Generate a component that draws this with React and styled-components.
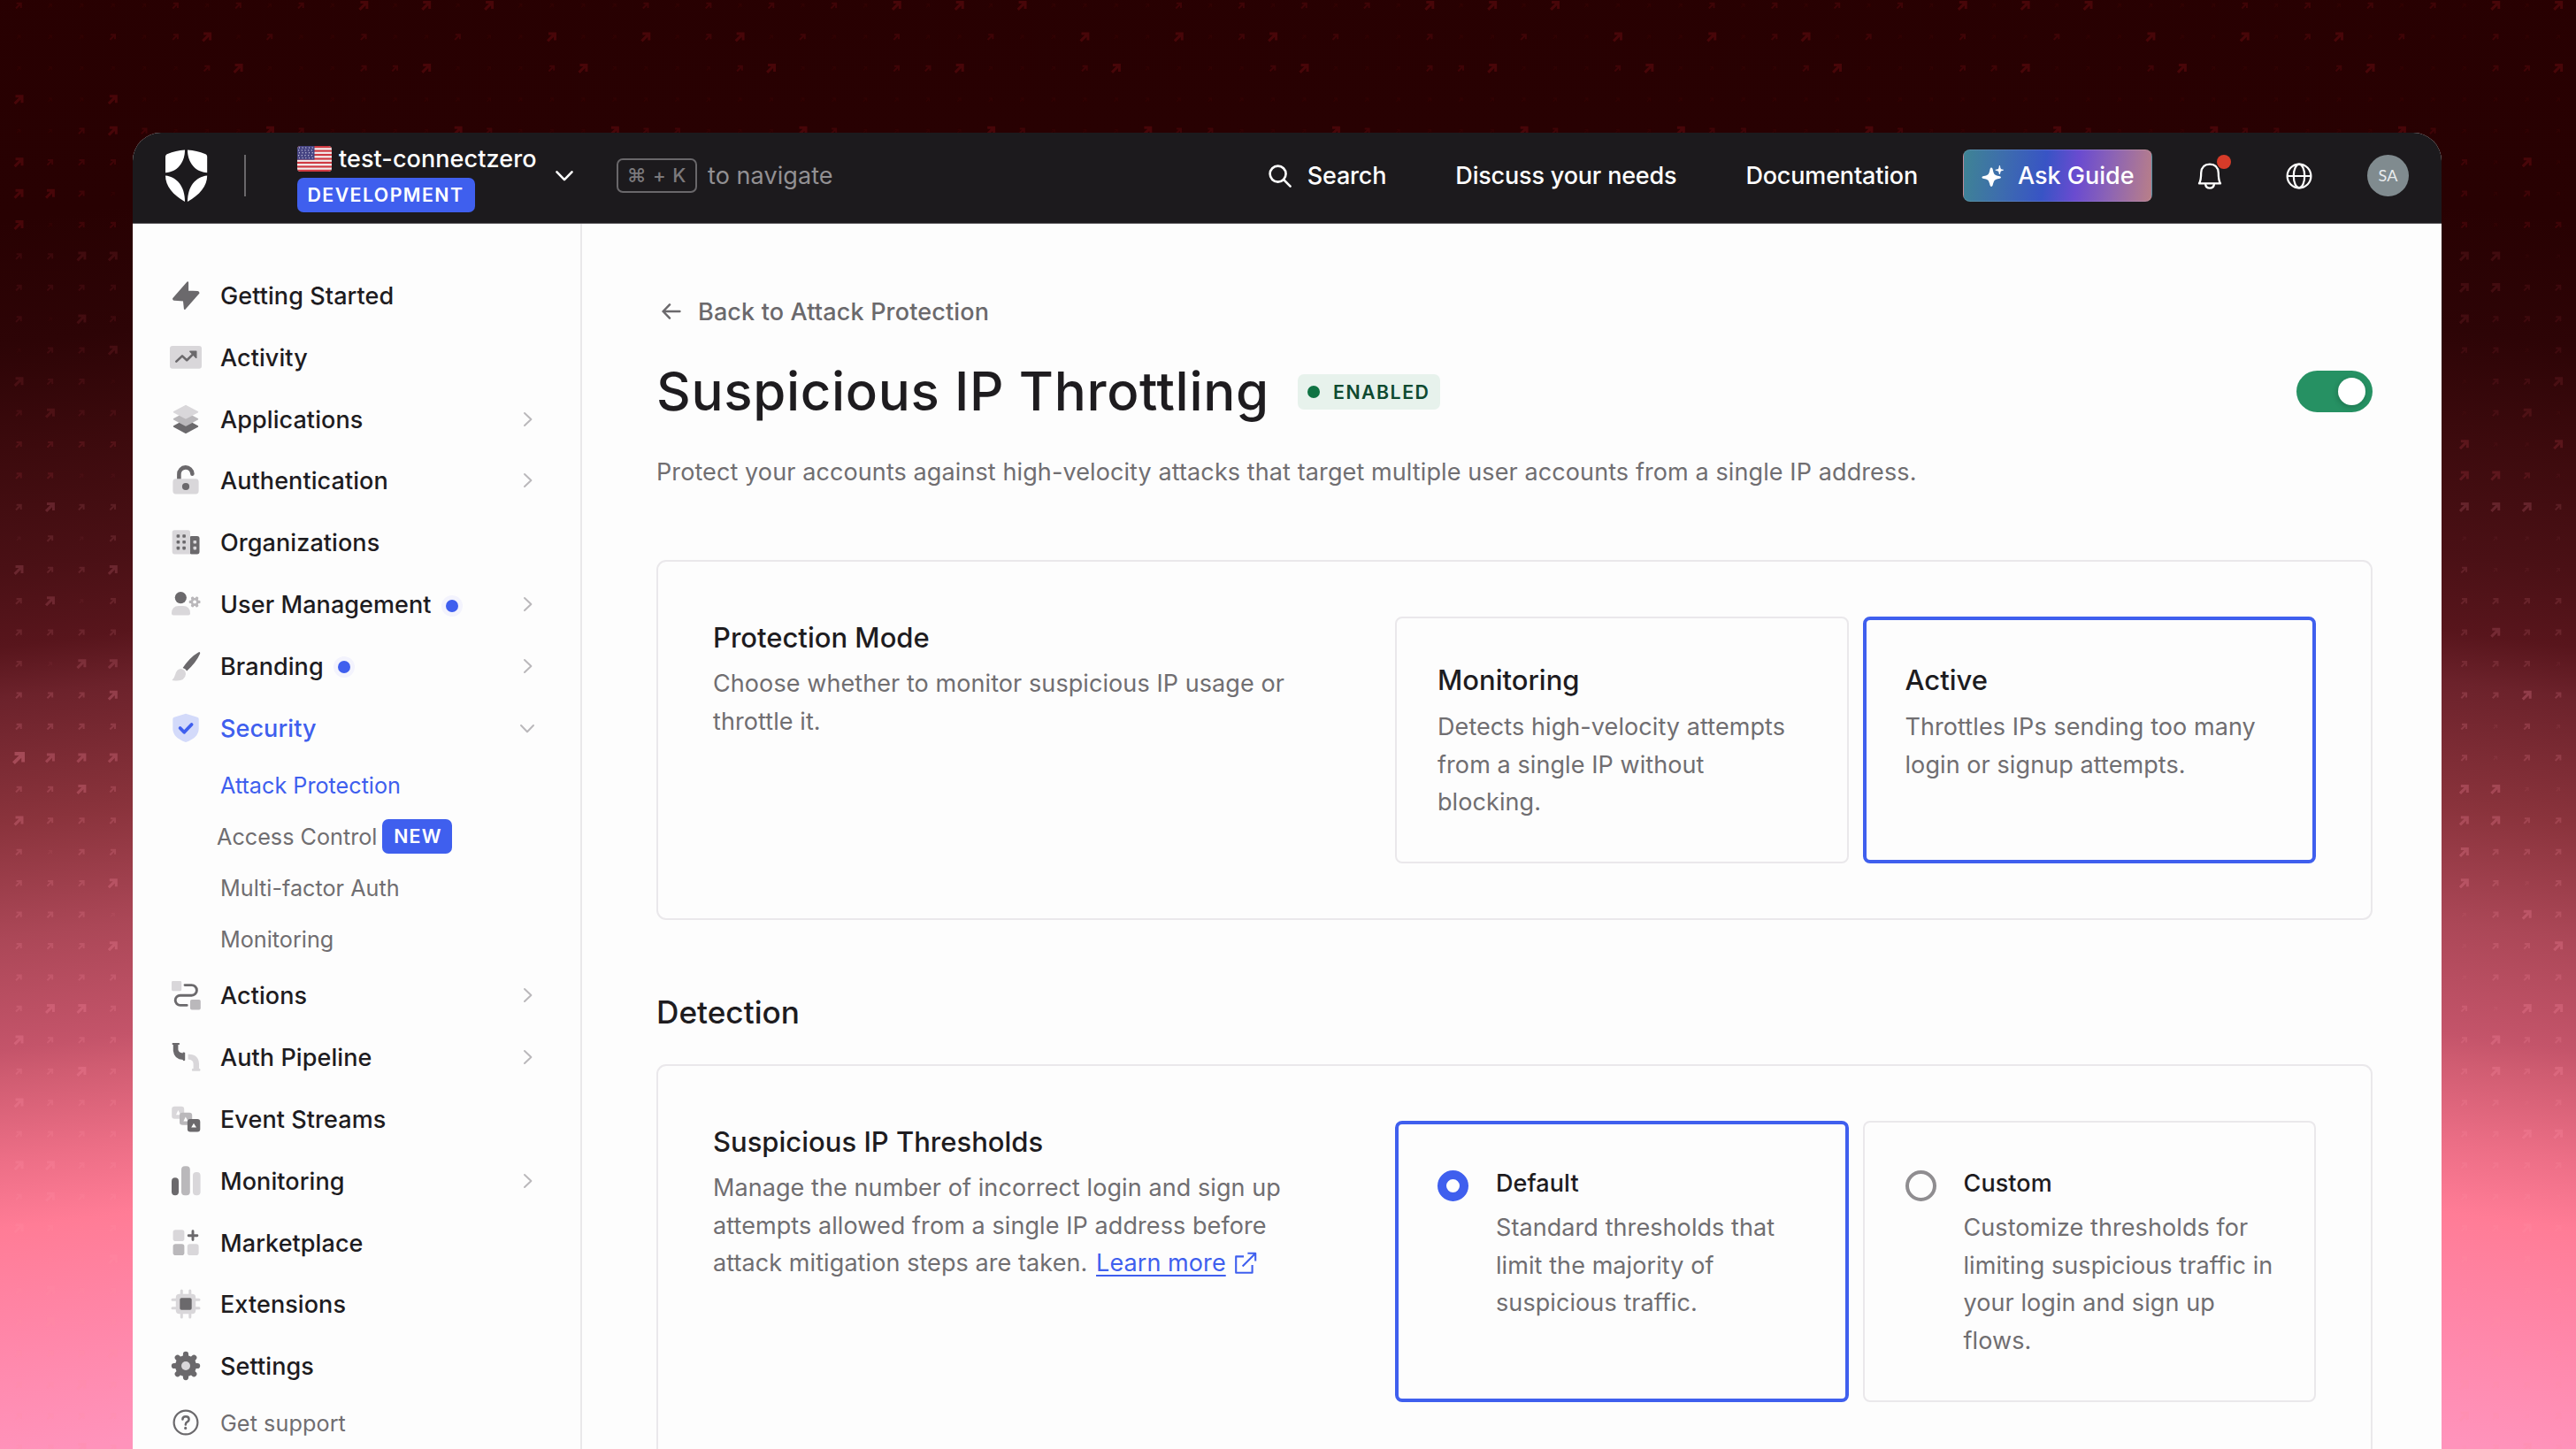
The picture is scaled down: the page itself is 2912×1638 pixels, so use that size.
import React, { useState } from 'react'
import styled, { createGlobalStyle } from 'styled-components';

const DARK = '#6b696c';
const MID = '#bab8bb';
const LIGHT = '#d9d7da';
const BLUE = '#3f5fee';

// arrow sizes of the backdrop, one string per row, one digit per column
const leftArrows = {
  0: '1000', 1: '0001', 2: '0000', 3: '3003', 4: '0013', 5: '3111', 6: '3310',
  22: '1113', 23: '1111', 24: '4333', 25: '1131', 26: '3111', 27: '1011',
  28: '1113', 29: '1110', 30: '1113', 31: '1111', 32: '1331', 33: '3111',
  34: '1131', 35: '3111', 36: '1111', 37: '3311', 38: '1311', 39: '3101',
  40: '0003', 41: '1311', 42: '1311', 43: '1113', 44: '1131', 45: '1111', 46: '1131',
};
const rightArrows = {
  11: '1101', 12: '0113', 13: '0130', 14: '3003', 15: '3310', 16: '3331',
  17: '0000', 18: '1000', 19: '1111', 20: '1311',
};
const ARROW_STEP = 35.44;
const ARROW_WIDTH = [5, 7.5, 7.5, 11, 14];

const arrowLevel = (row, col) => {
  if (col < 4 && leftArrows[row]) return Number(leftArrows[row][col]);
  if (col > 77 && rightArrows[row]) return Number(rightArrows[row][col - 78]);
  const hash = (row * 7919 + col * 104729 + row * col * 31) % 17;
  if (row < 6) return hash > 13 ? 3 : hash > 9 ? 1 : 0;
  return hash > 12 ? 3 : hash > 2 ? 1 : 0;
};

const Backdrop = () => {
  const arrows = [];
  for (let row = 0; row < 47; row++) {
    for (let col = 0; col < 82; col++) {
      // everything behind the window stays empty
      if (row > 4 && col > 3 && col < 78) continue;
      const level = arrowLevel(row, col);
      const size = ARROW_WIDTH[level];
      const x = 21 + col * ARROW_STEP - size / 2;
      const y = 6.5 + row * ARROW_STEP - size / 2;
      const base = row < 8 ? 0.65 : row < 14 ? 0.45 : row < 22 ? 0.65 : 0.95;
      arrows.push(
        <path
          key={`${row}-${col}`}
          d="M2 0H11V9H8V5.2L2.2 11L0 8.8L5.8 3H2Z"
          transform={`translate(${x} ${y}) scale(${size / 11})`}
          fill={row < 8 ? '#e0202c' : row < 16 ? '#f0505f' : '#ff8fa6'}
          opacity={base * [0.08, 0.2, 0.2, 0.27, 0.34][level]}
        />
      );
    }
  }
  return <BackdropSvg width="2912" height="1638">{arrows}</BackdropSvg>;
};

const Gear = ({ cx, cy, r, tooth, fill, hole, holeFill }) => (
  <g fill={fill}>
    <circle cx={cx} cy={cy} r={r * 0.74} />
    {[0, 45, 90, 135].map((deg) => (
      <rect
        key={deg}
        x={cx - tooth / 2}
        y={cy - r}
        width={tooth}
        height={r * 2}
        rx={tooth / 2}
        transform={`rotate(${deg} ${cx} ${cy})`}
      />
    ))}
    <circle cx={cx} cy={cy} r={hole} fill={holeFill} />
  </g>
);

const navIcons = {
  bolt: (
    <path d="M20.2 3.2L4 21.5Q3.8 22.6 5 22.8L15.8 23.6L16.8 33.2L32.6 15.2Q32.6 14 31.4 13.9L20.2 13.4Z" fill={DARK} stroke={DARK} strokeWidth="1.8" strokeLinejoin="round" />
  ),
  activity: (
    <>
      <rect x="0" y="5" width="36" height="25.8" rx="3" fill={LIGHT} />
      <path d="M7.3 22.6L14 16.4L19.2 21.2L27 13.6" fill="none" stroke={DARK} strokeWidth="2.6" strokeLinecap="round" strokeLinejoin="round" />
      <path d="M22.8 11.2H29.8V18.4Z" fill={DARK} stroke={DARK} strokeWidth="1.4" strokeLinejoin="round" />
    </>
  ),
  layers: (
    <g strokeWidth="1.6" strokeLinejoin="round">
      <path d="M18 18.8L31.4 26L18 33.2L4.6 26Z" fill={DARK} stroke={DARK} />
      <path d="M18 10.6L31.4 17.8L18 25L4.6 17.8Z" fill={MID} stroke={MID} />
      <path d="M18 2.6L31.4 9.7L18 16.8L4.6 9.7Z" fill={LIGHT} stroke={LIGHT} />
    </g>
  ),
  lock: (
    <>
      <path d="M10.4 16.5V11.2A7.5 7.5 0 0 1 25.4 10.6" fill="none" stroke={DARK} strokeWidth="4.6" strokeLinecap="round" />
      <rect x="3.4" y="16.3" width="29.2" height="17.2" rx="3.4" fill={LIGHT} />
      <circle cx="18" cy="25" r="4.1" fill={DARK} />
    </>
  ),
  building: (
    <>
      <rect x="22" y="11" width="11.5" height="20.4" rx="2.6" fill={DARK} />
      <path d="M5.4 4.2H20.4Q23 4.2 23 6.8V31.4H5.4Q2.7 31.4 2.7 28.8V6.8Q2.7 4.2 5.4 4.2Z" fill={LIGHT} />
      {[11, 17.8, 24.6].map((y) => (
        <g key={y} fill={DARK}>
          <rect x="7.6" y={y - 1.8} width="3.6" height="3.6" rx="0.8" />
          <rect x="14.3" y={y - 1.8} width="3.6" height="3.6" rx="0.8" />
        </g>
      ))}
      <rect x="26.5" y="16" width="3.6" height="3.6" rx="0.8" fill={LIGHT} />
      <rect x="26.5" y="22.8" width="3.6" height="3.6" rx="0.8" fill={LIGHT} />
    </>
  ),
  users: (
    <>
      <circle cx="12.3" cy="10.6" r="6.6" fill={DARK} />
      <path d="M2 28.5Q2 20 10 20H15Q23 20 23 28.5Q23 30.6 21 30.6H4Q2 30.6 2 28.5Z" fill={LIGHT} />
      <g fill={MID}>
        {[30, 90, 150].map((deg) => (
          <rect key={deg} x="26.4" y="9" width="3.4" height="12.8" rx="1.2" transform={`rotate(${deg} 28.1 15.4)`} />
        ))}
        <circle cx="28.1" cy="15.4" r="4.5" />
        <circle cx="28.1" cy="15.4" r="1.9" fill="#fff" />
      </g>
    </>
  ),
  brush: (
    <>
      <path d="M14.6 20Q22.5 8 32.2 2.4Q34.4 1.4 34.2 3.8Q29.5 14.5 19.2 23.4Q17.6 21 14.6 20Z" fill={DARK} />
      <path d="M2.4 34Q5.2 31.4 6.2 27.2Q7.6 21.6 12.6 21Q17.6 21.8 18 26.6Q17.6 34.4 8 34.4Q3.6 34.6 2.4 34Z" fill={LIGHT} />
    </>
  ),
  shield: (
    <>
      <path d="M18 1.8L31 5.8Q32.7 6.4 32.7 8V18.4Q32.7 28.8 18 33.9Q3.3 28.8 3.3 18.4V8Q3.3 6.4 5 5.8Z" fill="#d3dafa" />
      <path d="M11.6 18L16.2 22.8L24.6 14" fill="none" stroke={BLUE} strokeWidth="3.8" strokeLinecap="round" strokeLinejoin="round" />
    </>
  ),
  actions: (
    <>
      <rect x="2" y="2" width="11.2" height="11.2" rx="1.4" fill={LIGHT} />
      <rect x="23" y="23" width="11.8" height="11.5" rx="1.8" fill={MID} />
      <path d="M17 6.6H24.6A5.8 5.8 0 0 1 24.6 18.2H11.8A5.5 5.5 0 0 0 11.8 29.4H19.2" fill="none" stroke={DARK} strokeWidth="2.9" strokeLinecap="round" />
    </>
  ),
  pipeline: (
    <>
      <path d="M3 2H10.6Q11.6 3 10.6 4H9.4V9.6Q9.8 13.2 14.6 13.4V12.8Q16 12 17.2 13V21.6Q16 22.8 14.8 21.8V21Q5 20.6 3.8 11V4H3Q2 3 3 2Z" fill={DARK} />
      <path d="M20.6 14.8Q32.4 14.4 33 25.6V31H34Q35.2 32.4 34 33.8H25.4Q24.2 32.4 25.4 31H26.6V25.6Q26.6 21 20.6 20.6Z" fill={LIGHT} />
    </>
  ),
  streams: (
    <>
      <rect x="2.2" y="3.8" width="14" height="14" rx="3.2" fill={LIGHT} />
      <path d="M9.4 8L12 13.2H7Z" fill="#fff" />
      <rect x="11" y="10.8" width="14.2" height="14" rx="3.2" fill={MID} />
      <path d="M17.8 15.4L20.6 20.4H15.4Z" fill="#fff" />
      <rect x="19.9" y="18" width="14.4" height="14.4" rx="3.2" fill={DARK} />
      <path d="M27 22.8L30 27.6H24.2Z" fill="#fff" />
    </>
  ),
  bars: (
    <>
      <rect x="2" y="14.2" width="8" height="20" rx="4" fill={DARK} />
      <rect x="13" y="1.2" width="9.8" height="33" rx="4" fill={MID} />
      <rect x="26" y="8" width="8.6" height="26.2" rx="4" fill={LIGHT} />
    </>
  ),
  market: (
    <>
      <rect x="3.6" y="3.3" width="12.8" height="12.8" rx="2.8" fill={LIGHT} />
      <rect x="3.6" y="19.3" width="12.8" height="12.8" rx="2.8" fill={MID} />
      <rect x="19.8" y="19.3" width="12.8" height="12.8" rx="2.8" fill={LIGHT} />
      <path d="M26 4.8V14.6M21.2 9.7H30.9" stroke={DARK} strokeWidth="2.9" strokeLinecap="round" />
    </>
  ),
  chip: (
    <>
      <path d="M13.3 3V33M22.8 3V33M3 13.3H33M3 22.8H33" stroke={LIGHT} strokeWidth="3" strokeLinecap="round" />
      <rect x="6.8" y="6.8" width="22.4" height="22.4" rx="4" fill={LIGHT} />
      <rect x="11.3" y="11.3" width="13.4" height="13.4" rx="1.8" fill={DARK} />
    </>
  ),
  gear: <Gear cx={18} cy={18} r={16.2} tooth={6.2} fill={DARK} hole={5} holeFill={LIGHT} />,
  help: (
    <g fill="none" stroke={DARK} strokeLinecap="round">
      <circle cx="18" cy="18" r="13.4" strokeWidth="2.2" />
      <path d="M14.4 14.6Q14.4 11.2 18 11.2Q21.6 11.2 21.6 14.4Q21.6 16.4 19.6 17.4Q17.8 18.4 17.8 20.4" strokeWidth="2.5" />
      <circle cx="17.7" cy="24.4" r="0.7" strokeWidth="1.8" />
    </g>
  ),
};

const Chevron = ({ down, size = 18, color = MID, stroke = 2 }) => (
  <svg width={size} height={size} viewBox="0 0 18 18" fill="none" stroke={color} strokeWidth={stroke} strokeLinecap="round" strokeLinejoin="round">
    <path d={down ? 'M2 6L9 13.2L16 6' : 'M6 2L13.4 9L6 16'} />
  </svg>
);

const Logo = () => (
  <svg width="49" height="59" viewBox="0 0 49 59" fill="#fff">
    <path d="M23 0.4C23 15 14 25.4 1 26.2V8.4C1 6.6 1.8 5.6 3.4 4.9C9.5 2.3 16 0.8 23 0.4Z" />
    <path d="M26 0.4C26 15 35 25.4 48.2 26.2V8.4C48.2 6.6 47.4 5.6 45.8 4.9C39.5 2.3 33 0.8 26 0.4Z" />
    <path d="M1 29.6C14 31 23 42 23 59C9.5 51.5 1 41.5 1 29.6Z" />
    <path d="M48.2 29.6C35 31 26 42 26 59C39.6 51.5 48.2 41.5 48.2 29.6Z" />
  </svg>
);

const Flag = () => (
  <FlagSvg width="39" height="29" viewBox="0 0 39 29">
    <rect width="39" height="29" fill="#f3eeee" />
    {[0, 1, 2, 3, 4, 5, 6].map((n) => (
      <rect key={n} y={n * 4.46} width="39" height="2.23" fill="#cf3a42" />
    ))}
    <rect width="19.5" height="15.6" fill="#454382" />
    {[0, 1, 2, 3, 4].map((r) =>
      [0, 1, 2, 3, 4].map((c) => (
        <circle key={`${r}${c}`} cx={2.4 + c * 3.7 - (r % 2) * 0.8} cy={2 + r * 2.9} r="0.7" fill="#c9c8de" />
      ))
    )}
  </FlagSvg>
);

const navItems = [
  { label: 'Getting Started', icon: 'bolt' },
  { label: 'Activity', icon: 'activity' },
  { label: 'Applications', icon: 'layers', more: true },
  { label: 'Authentication', icon: 'lock', more: true },
  { label: 'Organizations', icon: 'building' },
  { label: 'User Management', icon: 'users', more: true, dot: true },
  { label: 'Branding', icon: 'brush', more: true, dot: true },
  {
    label: 'Security',
    icon: 'shield',
    more: true,
    open: true,
    children: [
      { label: 'Attack Protection', active: true },
      { label: 'Access Control', isNew: true },
      { label: 'Multi-factor Auth' },
      { label: 'Monitoring' },
    ],
  },
  { label: 'Actions', icon: 'actions', more: true },
  { label: 'Auth Pipeline', icon: 'pipeline', more: true },
  { label: 'Event Streams', icon: 'streams' },
  { label: 'Monitoring', icon: 'bars', more: true },
  { label: 'Marketplace', icon: 'market' },
  { label: 'Extensions', icon: 'chip' },
  { label: 'Settings', icon: 'gear' },
];

const Header = () => (
  <TopBar>
    <Logo />
    <Divider />
    <Tenant>
      <TenantName><Flag /><span>test-connectzero</span></TenantName>
      <EnvBadge>DEVELOPMENT</EnvBadge>
    </Tenant>
    <TenantChevron><Chevron down size={22} color="#fff" stroke={2.1} /></TenantChevron>
    <Keys>⌘ + K</Keys>
    <KeysHint>to navigate</KeysHint>
    <TopLinks>
      <TopLink>
        <svg width="28" height="28" viewBox="0 0 28 28" fill="none" stroke="#fff" strokeWidth="2.6" strokeLinecap="round">
          <circle cx="11.6" cy="11.6" r="9" />
          <path d="M18.4 18.4L25.6 25.6" />
        </svg>
        Search
      </TopLink>
      <TopLink>Discuss your needs</TopLink>
      <TopLink>Documentation</TopLink>
    </TopLinks>
    <AskGuide>
      <svg width="26" height="26" viewBox="0 0 26 26" fill="#fff">
        <path d="M11 3.6Q12.2 3.6 12.6 5Q13.6 10.6 15.2 11.6Q16.4 12.6 20.6 13.2Q22 13.6 22 14.4Q22 15.4 20.6 15.8Q16.4 16.4 15.2 17.4Q13.6 18.6 12.6 23.6Q12.2 25 11 25Q10 25 9.6 23.6Q8.6 18.6 7 17.4Q5.8 16.4 1.6 15.8Q0.4 15.4 0.4 14.4Q0.4 13.6 1.6 13.2Q5.8 12.6 7 11.6Q8.6 10.6 9.6 5Q10 3.6 11 3.6Z" />
        <path d="M20.4 1.2Q21 4.8 21.6 5.2Q22.2 5.8 24.6 6.2Q22.2 6.8 21.6 7.4Q21 8 20.4 11Q19.8 8 19.2 7.4Q18.4 6.8 15.8 6.2Q18.4 5.8 19.2 5.2Q19.8 4.8 20.4 1.2Z" stroke="#fff" strokeWidth="0.8" />
      </svg>
      Ask Guide
    </AskGuide>
    <BellBox>
      <svg width="28" height="30" viewBox="0 0 28 30" fill="none" stroke="#fff" strokeWidth="2.3" strokeLinejoin="round">
        <path d="M2 23.4Q4.2 19.6 4.2 11.4Q4.8 1.6 14 1.6Q23.2 1.6 23.8 11.4Q23.8 19.6 26 23.4Z" />
        <path d="M9 24Q9.6 28.6 14 28.6Q18.4 28.6 19 24" />
      </svg>
      <RedDot />
    </BellBox>
    <svg width="30" height="30" viewBox="0 0 30 30" fill="none" stroke="#fff" strokeWidth="2.2">
      <circle cx="15" cy="15" r="13.4" />
      <ellipse cx="15" cy="15" rx="6.2" ry="13.4" />
      <path d="M1.6 15H28.4" />
    </svg>
    <Avatar>SA</Avatar>
  </TopBar>
);

const Sidebar = () => (
  <Side>
    {navItems.map((item) => (
      <React.Fragment key={item.label + item.icon}>
        <NavItem $active={item.open}>
          <svg width="36" height="36" viewBox="0 0 36 36">{navIcons[item.icon]}</svg>
          <NavLabel>{item.label}</NavLabel>
          {item.dot && <NavDot />}
          {item.more && <NavMore><Chevron down={item.open} /></NavMore>}
        </NavItem>
        {item.children && item.children.map((child) => (
          <SubItem key={child.label} $active={child.active} $isNew={child.isNew}>
            {child.label}
            {child.isNew && <NewBadge>NEW</NewBadge>}
          </SubItem>
        ))}
      </React.Fragment>
    ))}
    <Support>
      <svg width="36" height="36" viewBox="0 0 36 36">{navIcons.help}</svg>
      <span>Get support</span>
    </Support>
  </Side>
);

const App = () => {
  const [enabled, setEnabled] = useState(true);
  const [mode, setMode] = useState('active');
  const [threshold, setThreshold] = useState('default');

  return (
    <Page>
      <GlobalStyle />
      <Backdrop />
      <Window>
        <Header />
        <Body>
          <Sidebar />
          <Main>
            <BackLink>
              <svg width="22" height="20" viewBox="0 0 22 20" fill="none" stroke={DARK} strokeWidth="2.5" strokeLinecap="round" strokeLinejoin="round">
                <path d="M20.4 10H1.6M9 2.4L1.6 10L9 17.6" />
              </svg>
              Back to Attack Protection
            </BackLink>
            <TitleRow>
              <Title>Suspicious IP Throttling</Title>
              <Status><i />ENABLED</Status>
              <Toggle $on={enabled} onClick={() => setEnabled(!enabled)}><span /></Toggle>
            </TitleRow>
            <Lead>Protect your accounts against high-velocity attacks that target multiple user accounts from a single IP address.</Lead>

            <Card $height={407}>
              <CardText>
                <CardTitle>Protection Mode</CardTitle>
                <Copy>Choose whether to monitor suspicious IP usage or<br />throttle it.</Copy>
              </CardText>
              <Options>
                <Option $height={279} $selected={mode === 'monitoring'} onClick={() => setMode('monitoring')}>
                  <div>
                    <OptionTitle>Monitoring</OptionTitle>
                    <Copy>Detects high-velocity attempts<br />from a single IP without<br />blocking.</Copy>
                  </div>
                </Option>
                <Option $height={279} $selected={mode === 'active'} onClick={() => setMode('active')}>
                  <div>
                    <OptionTitle>Active</OptionTitle>
                    <Copy>Throttles IPs sending too many<br />login or signup attempts.</Copy>
                  </div>
                </Option>
              </Options>
            </Card>

            <SectionTitle>Detection</SectionTitle>

            <Card $height={520}>
              <CardText>
                <CardTitle>Suspicious IP Thresholds</CardTitle>
                <Copy>
                  Manage the number of incorrect login and sign up<br />
                  attempts allowed from a single IP address before<br />
                  attack mitigation steps are taken. <LearnMore>Learn more</LearnMore>
                  <LinkIcon width="26" height="26" viewBox="0 0 26 26" fill="none" stroke={BLUE} strokeWidth="2.1" strokeLinejoin="round">
                    <path d="M11 5.4H2.2V23.8H20.6V15" />
                    <path d="M15.4 1.8H24.2V10.6M24 2L9.6 16.4" />
                  </LinkIcon>
                </Copy>
              </CardText>
              <Options>
                <Option $height={318} $selected={threshold === 'default'} onClick={() => setThreshold('default')}>
                  <Radio $checked={threshold === 'default'} />
                  <div>
                    <RadioTitle>Default</RadioTitle>
                    <Copy>Standard thresholds that<br />limit the majority of<br />suspicious traffic.</Copy>
                  </div>
                </Option>
                <Option $height={318} $selected={threshold === 'custom'} onClick={() => setThreshold('custom')}>
                  <Radio $checked={threshold === 'custom'} />
                  <div>
                    <RadioTitle>Custom</RadioTitle>
                    <Copy>Customize thresholds for<br />limiting suspicious traffic in<br />your login and sign up<br />flows.</Copy>
                  </div>
                </Option>
              </Options>
            </Card>
          </Main>
        </Body>
      </Window>
    </Page>
  );
};

const GlobalStyle = createGlobalStyle`
  * {
    box-sizing: border-box;
  }
  body {
    margin: 0;
    font-family: Inter, "Liberation Sans", sans-serif;
    font-size: 27px;
    letter-spacing: 0.08px;
    color: #1e1c1f;
  }
  svg {
    flex-shrink: 0;
  }
`

const Page = styled.div`
  position: relative;
  width: 2912px;
  height: 1638px;
  padding: 150px 152px 0 150px;
  overflow: hidden;
  background: radial-gradient(
    circle 12200px at 1456px 12000px,
    #ff93bb 10454px,
    #ff86a8 10590px,
    #ff7c96 10710px,
    #ec6e86 10788px,
    #cf5c71 10880px,
    #c4546a 10910px,
    #ab4757 11036px,
    #8a333c 11165px,
    #6c222b 11305px,
    #58151c 11362px,
    #4a1015 11450px,
    #3c0a0d 11583px,
    #2d0406 11700px,
    #280102 11841px,
    #280001 12200px
  );
`

const BackdropSvg = styled.svg`
  position: absolute;
  top: 0;
  left: 0;
`

const Window = styled.div`
  position: relative;
  height: 1488px;
  display: flex;
  flex-direction: column;
  overflow: hidden;
  border-radius: 32px 32px 0 0;
  background: #fdfdfd;
`

const TopBar = styled.header`
  height: 103px;
  flex-shrink: 0;
  display: flex;
  align-items: center;
  padding: 0 37px 5px 36px;
  background: #1c1a1d;
  border-bottom: 1px solid #5d5b5e;
  color: #fff;
`

const Divider = styled.div`
  width: 2px;
  height: 47px;
  margin-left: 41px;
  background: #69676a;
`

const Tenant = styled.div`
  width: 284px;
  margin-left: 58px;
  padding-top: 5px;
  display: flex;
  flex-direction: column;
  align-items: flex-start;
  gap: 3px;
`

const TenantName = styled.div`
  display: flex;
  align-items: center;
  gap: 8px;
  height: 35px;
  font-weight: 500;
  white-space: nowrap;

  span {
    margin-top: -2px;
  }
`

const FlagSvg = styled.svg`
  margin-top: -2px;
  border-radius: 4px;
`

const EnvBadge = styled.div`
  width: 201px;
  height: 39px;
  padding-left: 11.5px;
  line-height: 39px;
  border-radius: 7px;
  background: ${BLUE};
  font-size: 21.3px;
  font-weight: 600;
  letter-spacing: 1.45px;
`

const TenantChevron = styled.div`
  display: flex;
  margin-left: 7px;
  padding-bottom: 1px;
`

const Keys = styled.div`
  width: 91px;
  height: 39px;
  margin-left: 48px;
  border: 2px solid #69676a;
  border-radius: 7px;
  color: #7b797c;
  font-size: 22px;
  font-weight: 500;
  letter-spacing: 0.8px;
  line-height: 35px;
  text-align: center;
  white-space: nowrap;
`

const KeysHint = styled.div`
  margin-left: 12px;
  color: #929093;
`

const TopLinks = styled.nav`
  display: flex;
  gap: 78px;
  margin-left: auto;
  margin-right: 51px;
`

const TopLink = styled.a`
  display: flex;
  align-items: center;
  gap: 17px;
  font-weight: 450;
  letter-spacing: -0.18px;
  white-space: nowrap;
  color: #fff;
`

const AskGuide = styled.button`
  display: flex;
  align-items: center;
  gap: 15px;
  width: 214px;
  height: 59px;
  padding: 0 0 0 20px;
  border: 1px solid rgba(255, 255, 255, 0.12);
  border-radius: 8px;
  background: linear-gradient(97deg, #3f8494 0%, #3d6cae 22%, #3854c5 43%, #6a4bd0 60%, #8d64b4 78%, #b97f88 100%);
  color: #fff;
  font: inherit;
  font-weight: 500;
  white-space: nowrap;
`

const BellBox = styled.div`
  position: relative;
  display: flex;
  margin: 0 72px 0 51px;
`

const RedDot = styled.span`
  position: absolute;
  top: -9px;
  right: -10px;
  width: 16px;
  height: 16px;
  border-radius: 50%;
  background: #d63b29;
`

const Avatar = styled.div`
  width: 47px;
  height: 47px;
  margin-left: 62px;
  border-radius: 50%;
  background: #808b8f;
  color: #e8ecee;
  font-family: Lato, sans-serif;
  font-size: 18px;
  line-height: 47px;
  text-align: center;
`

const Body = styled.div`
  display: flex;
  flex: 1;
  min-height: 0;
`

const Side = styled.aside`
  width: 508px;
  flex-shrink: 0;
  padding-top: 46px;
  border-right: 2px solid #e9e8ea;
`

const NavItem = styled.div`
  display: flex;
  align-items: center;
  height: 69.83px;
  padding: 0 51px 0 42px;
  color: ${({ $active }) => ($active ? BLUE : '#1e1c1f')};
  font-weight: 500;
`

const NavLabel = styled.span`
  margin: 1px 0 0 21px;
  white-space: nowrap;
`

const NavDot = styled.span`
  width: 14px;
  height: 14px;
  margin: 3px 0 0 16px;
  border-radius: 50%;
  background: ${BLUE};
  box-shadow: 0 0 0 5px #f3f3fd;
`

const NavMore = styled.span`
  display: flex;
  margin-left: auto;
`

const SubItem = styled.div`
  display: flex;
  align-items: center;
  height: 58.2px;
  padding-top: 2px;
  padding-left: ${({ $isNew }) => ($isNew ? 95 : 99)}px;
  color: ${({ $active }) => ($active ? BLUE : '#706e71')};
  font-size: 25.2px;
  letter-spacing: 0;
`

const NewBadge = styled.span`
  width: 79px;
  height: 39px;
  margin-left: 6px;
  padding-left: 1px;
  border-radius: 7px;
  background: ${BLUE};
  color: #fff;
  font-size: 21.3px;
  font-weight: 600;
  letter-spacing: 1.2px;
  line-height: 39px;
  text-align: center;
`

const Support = styled.div`
  display: flex;
  align-items: center;
  gap: 21px;
  height: 58.2px;
  padding-left: 42px;
  color: #706e71;
  font-size: 25.2px;

  span {
    margin-top: 2px;
  }
`

const Main = styled.main`
  flex: 1;
  padding: 78px 78px 0 85px;
  margin-left: -1px;
`

const BackLink = styled.a`
  display: flex;
  align-items: center;
  gap: 19px;
  height: 42px;
  padding-left: 6px;
  color: #6b696c;
  font-weight: 500;
  letter-spacing: 0.15px;
`

const TitleRow = styled.div`
  display: flex;
  align-items: center;
  height: 80px;
  margin-top: 29px;
`

const Title = styled.h1`
  width: 725px;
  margin: 0;
  font-size: 60px;
  font-weight: 550;
  letter-spacing: 0.66px;
  white-space: nowrap;
`

const Status = styled.div`
  display: flex;
  align-items: center;
  gap: 15px;
  width: 161px;
  height: 40px;
  margin-top: 1px;
  padding-left: 11px;
  border-radius: 7px;
  background: #e7f2ec;
  color: #0e4a30;
  font-size: 21.3px;
  font-weight: 600;
  letter-spacing: 1.5px;

  i {
    width: 14px;
    height: 14px;
    border-radius: 50%;
    background: #0f7343;
  }
`

const Toggle = styled.button`
  display: flex;
  justify-content: ${({ $on }) => ($on ? 'flex-end' : 'flex-start')};
  width: 86px;
  height: 47px;
  margin-left: auto;
  padding: 8px;
  border: 0;
  border-radius: 24px;
  background: ${({ $on }) => ($on ? '#269163' : '#bab8bb')};

  span {
    width: 31px;
    height: 31px;
    border-radius: 50%;
    background: #fff;
    box-shadow: -1px 2px 6px rgba(0, 0, 0, 0.2);
  }
`

const Lead = styled.p`
  height: 43px;
  margin: 30px 0 78px;
  line-height: 44px;
  letter-spacing: 0.1px;
  color: #706e71;
  white-space: nowrap;
`

const Card = styled.section`
  display: flex;
  justify-content: space-between;
  height: ${({ $height }) => $height}px;
  padding: 62px;
  border: 2px solid #eae8eb;
  border-radius: 11px;
`

const CardText = styled.div`
  padding-top: 3px;
`

const CardTitle = styled.h3`
  margin: 0 0 10px;
  font-size: 31px;
  font-weight: 500;
  letter-spacing: 0;
  line-height: 42px;
`

const Copy = styled.p`
  margin: 0;
  color: #706e71;
  line-height: 42.7px;
  white-space: nowrap;
`

const Options = styled.div`
  display: flex;
  gap: 16px;
`

const Option = styled.div`
  display: flex;
  width: 512.5px;
  height: ${({ $height }) => $height}px;
  padding: ${({ $selected }) => ($selected ? 44 : 46)}px;
  border: ${({ $selected }) => ($selected ? `4px solid ${BLUE}` : '2px solid #eae8eb')};
  border-radius: 8px;
`

const OptionTitle = styled.h4`
  margin: 3px 0 11px;
  font-size: 31px;
  font-weight: 500;
  letter-spacing: 0;
  line-height: 42px;
`

const RadioTitle = styled.h4`
  margin: 2px 0 8px;
  font-size: 27px;
  font-weight: 500;
  line-height: 42px;
`

const Radio = styled.div`
  width: 35px;
  height: 35px;
  flex-shrink: 0;
  margin: 8px 31px 0 0;
  border: ${({ $checked }) => ($checked ? `10px solid ${BLUE}` : '4px solid #8f8d90')};
  border-radius: 50%;
`

const SectionTitle = styled.h2`
  margin: 79px 0 33px;
  font-size: 35.2px;
  font-weight: 500;
  letter-spacing: 0;
  line-height: 51px;
`

const LearnMore = styled.a`
  margin-left: 2px;
  color: ${BLUE};
  text-decoration: underline;
  text-underline-offset: 4px;
`

const LinkIcon = styled.svg`
  margin-left: 9px;
  vertical-align: -4px;
`

export default App
